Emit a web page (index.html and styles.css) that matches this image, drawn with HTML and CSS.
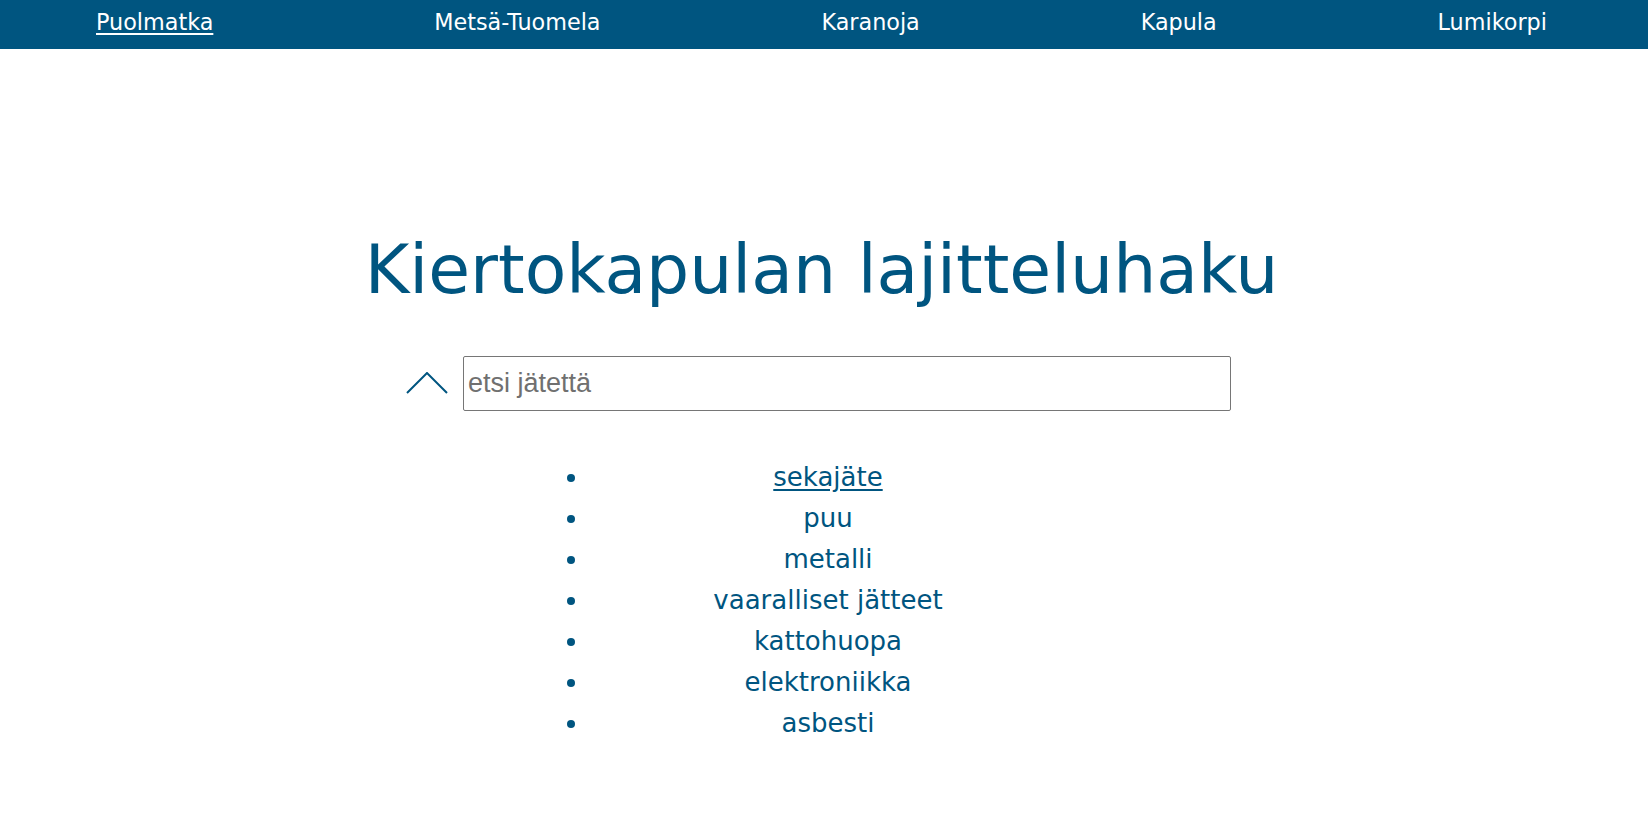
FILE: index.html
```html
<!DOCTYPE html>
<html lang="fi">
<head>
<meta charset="utf-8">
<title>Kiertokapulan lajitteluhaku</title>
<link rel="stylesheet" href="styles.css">
</head>
<body>
<nav class="topnav">
  <a class="nav-link active" href="#">Puolmatka</a>
  <a class="nav-link" href="#">Metsä-Tuomela</a>
  <a class="nav-link" href="#">Karanoja</a>
  <a class="nav-link" href="#">Kapula</a>
  <a class="nav-link" href="#">Lumikorpi</a>
</nav>
<main class="main">
  <h1 class="title">Kiertokapulan lajitteluhaku</h1>
  <div class="search-row">
    <svg class="chevron" width="42" height="22" viewBox="0 0 42 22" aria-hidden="true">
      <polyline points="1,21 21,1 41,21" fill="none" stroke="#005580" stroke-width="2"/>
    </svg>
    <input class="search" type="text" placeholder="etsi jätettä">
  </div>
  <ul class="results">
    <li class="result"><a class="result-link" href="#">sekajäte</a></li>
    <li class="result">puu</li>
    <li class="result">metalli</li>
    <li class="result">vaaralliset jätteet</li>
    <li class="result">kattohuopa</li>
    <li class="result">elektroniikka</li>
    <li class="result">asbesti</li>
  </ul>
</main>
</body>
</html>
```
FILE: styles.css
```css
html, body {
  margin: 0;
  padding: 0;
  background: #ffffff;
}

body {
  font-family: "DejaVu Sans", "Noto Sans", sans-serif;
  color: #005580;
}

.topnav {
  height: 49px;
  box-sizing: border-box;
  background: #005580;
  display: flex;
  justify-content: space-between;
  align-items: flex-start;
  padding: 9px 101px 0 96px;
}

.nav-link {
  color: #ffffff;
  font-size: 22.3px;
  line-height: 26px;
  text-decoration: none;
}

.nav-link.active {
  text-decoration: underline;
  text-underline-offset: 3px;
}

.main {
  display: flex;
  flex-direction: column;
}

.title {
  margin: 181px 0 0;
  font-size: 68px;
  font-weight: normal;
  line-height: 79px;
  text-align: center;
  padding-right: 5px;
  color: #005580;
}

.search-row {
  margin-top: 47px;
  display: flex;
  justify-content: center;
  align-items: center;
  gap: 15px;
  padding-right: 11px;
}

.chevron {
  display: block;
  flex: none;
  margin-top: -2px;
}

.search {
  width: 768px;
  height: 55px;
  box-sizing: border-box;
  padding: 0 4px;
  border: 1px solid #767676;
  border-radius: 2px;
  font-family: "Liberation Sans", Arial, sans-serif;
  font-size: 27px;
  color: #222222;
  background: #ffffff;
}

.search::placeholder {
  color: #707070;
}

.results {
  margin: 46px 0 0 calc(50% - 274px);
  padding: 0 0 0 40px;
  width: 476px;
  list-style: disc outside;
}

.result {
  font-size: 26px;
  line-height: 41px;
  text-align: center;
  color: #005580;
}

.result-link {
  color: #005580;
  text-decoration: underline;
  text-underline-offset: 3px;
}
```
